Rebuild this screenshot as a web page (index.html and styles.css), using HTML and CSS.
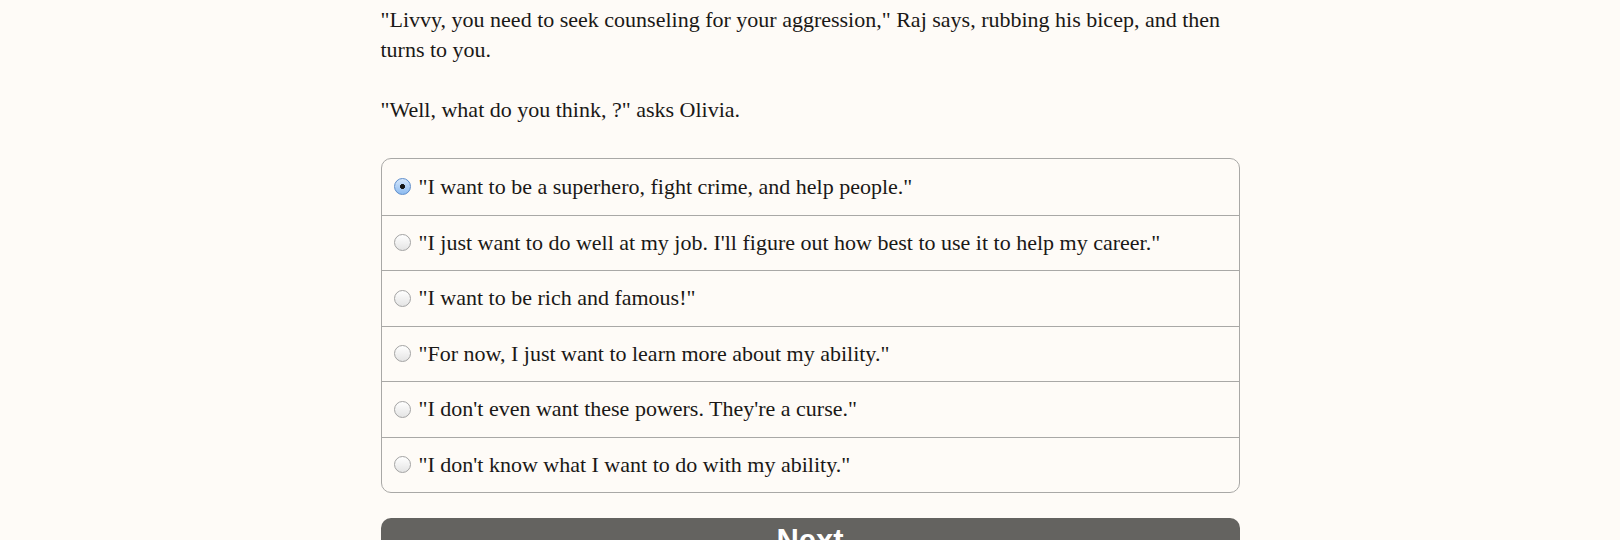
FILE: index.html
```html
<!DOCTYPE html>
<html lang="en">

<head>
	<meta charset="UTF-8">
	<title>Choice</title>
	<link rel="stylesheet" href="styles.css">
</head>

<body>
	<main class="story">
		<p>"Livvy, you need to seek counseling for your aggression," Raj says, rubbing his bicep, and then turns to you.</p>
		<p>"Well, what do you think, ?" asks Olivia.</p>

		<form class="choices">
			<label class="choice"><input type="radio" name="choice" checked> "I want to be a superhero, fight crime, and help people."</label>
			<label class="choice"><input type="radio" name="choice"> "I just want to do well at my job. I'll figure out how best to use it to help my career."</label>
			<label class="choice"><input type="radio" name="choice"> "I want to be rich and famous!"</label>
			<label class="choice"><input type="radio" name="choice"> "For now, I just want to learn more about my ability."</label>
			<label class="choice"><input type="radio" name="choice"> "I don't even want these powers. They're a curse."</label>
			<label class="choice"><input type="radio" name="choice"> "I don't know what I want to do with my ability."</label>
		</form>

		<button class="next">Next</button>
	</main>
</body>

</html>
```

FILE: styles.css
```css
* {
	margin: 0;
	padding: 0;
	box-sizing: border-box;
}

body {
	background-color: #fefbf7;
	color: #1a1816;
	font-family: "Liberation Serif", serif;
	font-size: 22px;
	line-height: 30px;
	overflow: hidden;
}

.story {
	width: 859px;
	margin: 0 auto;
	padding-top: 5px;
}

.story p {
	margin-bottom: 30px;
}

.choices {
	display: flex;
	flex-direction: column;
	border: 1px solid #a9a8a6;
	border-radius: 10px;
	margin-top: 33px;
}

.choice {
	display: flex;
	align-items: center;
	height: 55.5px;
	padding-left: 12px;
	border-top: 1px solid #a9a8a6;
}

.choice:first-child {
	border-top: none;
}

.choice input {
	appearance: none;
	flex: none;
	width: 17px;
	height: 17px;
	margin-right: 8px;
	border: 1px solid #a3a3a3;
	border-radius: 50%;
	background: linear-gradient(#ffffff, #e4e4e4);
}

.choice input:checked {
	border-color: #5f8ecb;
	background:
		radial-gradient(circle, #151515 0 2.2px, transparent 2.8px),
		linear-gradient(#d6e7fb, #8dbbf0);
}

.next {
	display: block;
	width: 100%;
	margin-top: 25px;
	padding: 6px 0 14px;
	background-color: #646360;
	color: #fff;
	border: none;
	border-radius: 10px;
	font-family: "Liberation Sans", Arial, sans-serif;
	font-weight: bold;
	font-size: 31px;
	line-height: 34px;
}
```
